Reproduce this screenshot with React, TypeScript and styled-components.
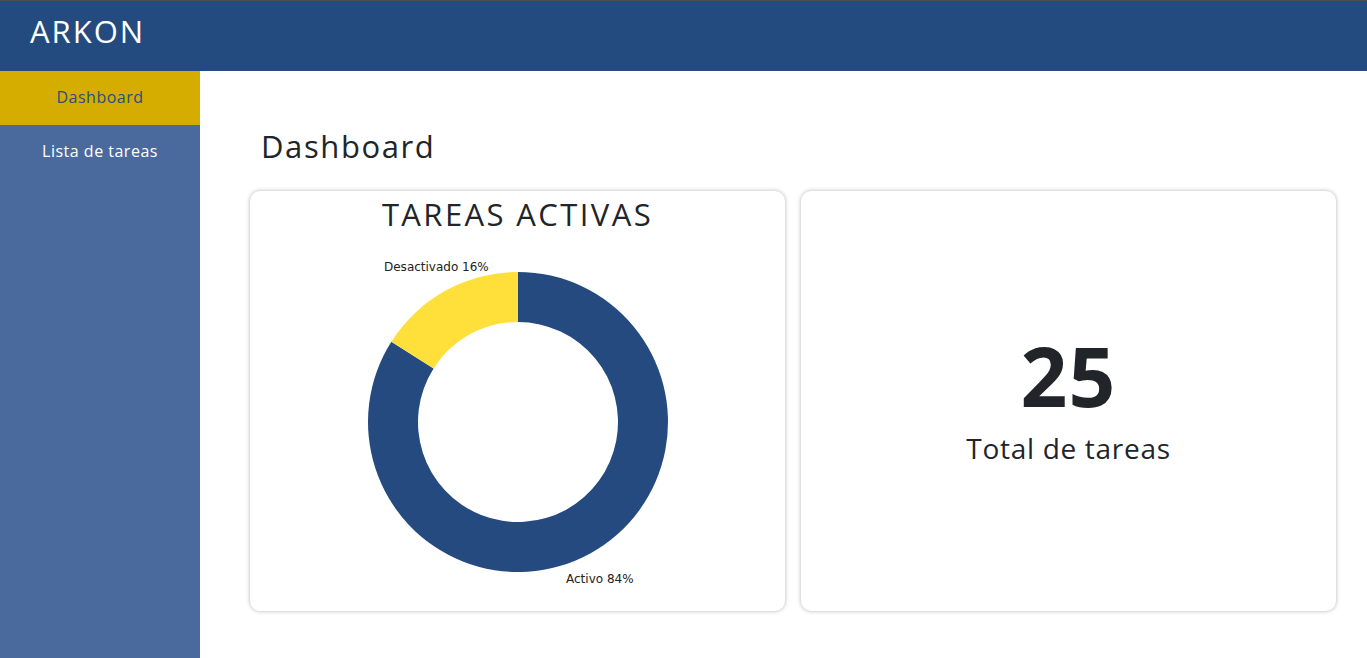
import styled, { createGlobalStyle } from 'styled-components'

const GlobalStyle = createGlobalStyle`
  html, body {
    margin: 0;
    padding: 0;
    background: #ffffff;
    font-family: 'Open Sans', 'Noto Sans', sans-serif;
    color: #212529;
  }
  * {
    box-sizing: border-box;
  }
`

type Slice = { label: string; value: number; color: string }

const slices: Slice[] = [
  { label: 'Activo', value: 84, color: '#244a80' },
  { label: 'Desactivado', value: 16, color: '#ffdf3a' },
]

const CX = 158
const CY = 166
const OUTER = 150
const INNER = 100

const point = (r: number, deg: number) => {
  const rad = (deg * Math.PI) / 180
  return [CX + r * Math.sin(rad), CY - r * Math.cos(rad)]
}

const arcPath = (start: number, end: number) => {
  const large = end - start > 180 ? 1 : 0
  const [x1, y1] = point(OUTER, start)
  const [x2, y2] = point(OUTER, end)
  const [x3, y3] = point(INNER, end)
  const [x4, y4] = point(INNER, start)
  return `M${x1} ${y1} A${OUTER} ${OUTER} 0 ${large} 1 ${x2} ${y2} L${x3} ${y3} A${INNER} ${INNER} 0 ${large} 0 ${x4} ${y4} Z`
}

const Donut = () => {
  const total = slices.reduce((sum, s) => sum + s.value, 0)
  let angle = 0
  return (
    <ChartSvg width={320} height={336} viewBox="0 0 320 336">
      {slices.map((s) => {
        const start = angle
        const end = angle + (s.value / total) * 360
        angle = end
        return <path key={s.label} d={arcPath(start, end)} fill={s.color} />
      })}
      <ChartLabel x={24} y={15}>Desactivado 16%</ChartLabel>
      <ChartLabel x={206} y={327}>Activo 84%</ChartLabel>
    </ChartSvg>
  )
}

const App = () => {
  return (
    <>
      <GlobalStyle />
      <TopBar>
        <Brand>ARKON</Brand>
      </TopBar>
      <Body>
        <SideNav>
          <NavItem active>Dashboard</NavItem>
          <NavItem>Lista de tareas</NavItem>
        </SideNav>
        <Main>
          <PageTitle>Dashboard</PageTitle>
          <CardRow>
            <Card>
              <CardTitle>TAREAS ACTIVAS</CardTitle>
              <Donut />
            </Card>
            <Card centered>
              <BigNumber>25</BigNumber>
              <BigCaption>Total de tareas</BigCaption>
            </Card>
          </CardRow>
        </Main>
      </Body>
    </>
  )
}

const TopBar = styled.header`
  height: 71px;
  border-top: 1px solid #4d4d4d;
  background-color: #234b80;
  display: flex;
  align-items: center;
  padding: 0 30px 10px;
`

const Brand = styled.span`
  color: #ffffff;
  font-size: 31px;
  letter-spacing: 2px;
`

const Body = styled.div`
  display: flex;
  min-height: calc(100vh - 71px);
`

const SideNav = styled.nav`
  width: 200px;
  flex-shrink: 0;
  background-color: #4a6a9e;
  display: flex;
  flex-direction: column;
`

const NavItem = styled.div<{ active?: boolean }>`
  height: 54px;
  display: flex;
  align-items: center;
  justify-content: center;
  padding-bottom: 2px;
  font-size: 16px;
  letter-spacing: 0.5px;
  color: ${(p) => (p.active ? '#2b4d80' : '#ffffff')};
  background-color: ${(p) => (p.active ? '#d4ad00' : 'transparent')};
  cursor: pointer;
`

const Main = styled.main`
  flex: 1;
  padding: 53px 31px 40px 50px;
`

const PageTitle = styled.h1`
  margin: 0 0 23px 11px;
  font-size: 31px;
  font-weight: 400;
  line-height: 44px;
  letter-spacing: 1.6px;
  color: #212529;
`

const CardRow = styled.div`
  display: grid;
  grid-template-columns: 1fr 1fr;
  gap: 16px;
`

const Card = styled.section<{ centered?: boolean }>`
  height: 420px;
  background: #ffffff;
  border-radius: 10px;
  box-shadow: 0 0 4px rgba(0, 0, 0, 0.3);
  display: flex;
  flex-direction: column;
  align-items: center;
  justify-content: ${(p) => (p.centered ? 'center' : 'flex-start')};
  padding-top: ${(p) => (p.centered ? '0' : '3px')};
`

const CardTitle = styled.h2`
  margin: 0;
  font-size: 31px;
  font-weight: 400;
  line-height: 40px;
  letter-spacing: 2.4px;
  color: #212529;
`

const ChartSvg = styled.svg`
  margin-top: 22px;
  margin-left: 4px;
`

const ChartLabel = styled.text`
  font-family: 'DejaVu Sans', sans-serif;
  font-size: 12px;
  fill: #222222;
`

const BigNumber = styled.div`
  font-size: 82px;
  font-weight: 700;
  line-height: 80px;
  letter-spacing: 1px;
  color: #212529;
`

const BigCaption = styled.div`
  margin-top: 14px;
  font-size: 28px;
  letter-spacing: 0.7px;
  color: #212529;
`

export default App
